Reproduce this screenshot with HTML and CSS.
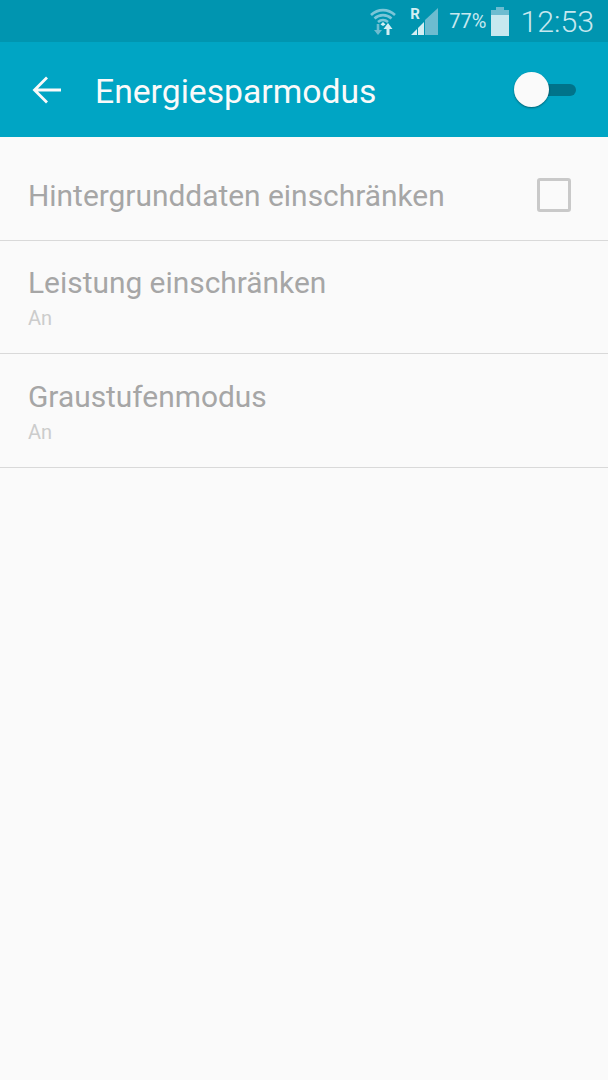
FILE: index.html

```html
<!DOCTYPE html>
<html lang="de">
<head>
  <meta charset="UTF-8">
  <meta name="viewport" content="width=device-width, initial-scale=1.0">
  <title>Energiesparmodus</title>
  <link rel="stylesheet" href="styles.css">
</head>
<body>
  <!-- Status bar -->
  <div class="status-bar">
    <svg class="wifi-icon" width="30" height="30" viewBox="0 0 30 30" fill="none">
      <path d="M3 9C10 2.5 20 2.5 27 9" stroke="#7cc6d8" stroke-width="2.6"/>
      <path d="M6.500 12.500C11.500 8 18.500 8 23.500 12.500" stroke="#7cc6d8" stroke-width="2.6"/>
      <path d="M10 16C13 13.500 17 13.500 20 16" stroke="#7cc6d8" stroke-width="2.6"/>
      <path d="M15 16L12.500 18.500L15 20L17.500 18.500Z" fill="#d3eef3"/>
      <path d="M10 18V25" stroke="#6dbcd0" stroke-width="2.6"/>
      <path d="M6 24H14L10 29Z" fill="#6dbcd0"/>
      <path d="M20 17L15.500 23H18.500V29H21.500V23H24.500Z" fill="#d3eef3"/>
    </svg>
    <div class="signal">
      <span class="roaming">R</span>
      <svg width="28" height="28" viewBox="0 0 28 28">
        <path d="M28 1V28H15V13Z" fill="#6dbcd0"/>
        <path d="M7 22V28H1Z" fill="#d3eef3"/>
        <path d="M14 15V28H8V21Z" fill="#d3eef3"/>
      </svg>
    </div>
    <span class="battery-pct">77%</span>
    <svg class="battery" width="18" height="29" viewBox="0 0 18 29">
      <rect x="5" y="0" width="8" height="3" fill="#6dbcd0"/>
      <rect x="0" y="3" width="18" height="5" fill="#6dbcd0"/>
      <rect x="0" y="8" width="18" height="21" fill="#c7e8ef"/>
    </svg>
    <span class="clock">12:53</span>
  </div>

  <!-- Action bar -->
  <header class="action-bar">
    <svg class="back-icon" width="30" height="30" viewBox="0 0 30 30" fill="none">
      <path d="M4 15H30M16 2.500L3.500 15L16 27.500" stroke="#fafafa" stroke-width="2.8"/>
    </svg>
    <h1 class="title">Energiesparmodus</h1>
    <div class="switch">
      <div class="switch-track"></div>
      <div class="switch-thumb"></div>
    </div>
  </header>

  <!-- Settings list -->
  <ul class="settings">
    <li class="item item-check">
      <span class="item-title">Hintergrunddaten einschränken</span>
      <span class="checkbox"></span>
    </li>
    <li class="item">
      <span class="item-title">Leistung einschränken</span>
      <span class="item-sub">An</span>
    </li>
    <li class="item">
      <span class="item-title">Graustufenmodus</span>
      <span class="item-sub">An</span>
    </li>
  </ul>
</body>
</html>
```

FILE: styles.css

```css
/* General reset */
html, body {
  margin: 0;
  padding: 0;
  height: 100%;
  background: #fafafa;
  font-family: Roboto, "Liberation Sans", sans-serif;
}

/* Status bar */
.status-bar {
  height: 42px;
  background: #0095b0;
  display: flex;
  align-items: center;
  justify-content: flex-end;
  padding-right: 14px;
  color: #c7e8ef;
}

.wifi-icon {
  margin-right: 12px;
}

.signal {
  position: relative;
  width: 28px;
  height: 28px;
  margin-right: 11px;
}

.roaming {
  position: absolute;
  left: 0;
  top: 0;
  font-size: 15px;
  font-weight: 700;
  line-height: 15px;
  color: #d3eef3;
}

.battery-pct {
  font-size: 20px;
  margin-right: 5px;
}

.clock {
  font-size: 30.3px;
  font-weight: 300;
  margin-left: 11px;
}

/* Action bar */
.action-bar {
  height: 95px;
  background: #00a5c4;
  display: flex;
  align-items: center;
  padding-left: 31px;
  padding-right: 32px;
}

.back-icon {
  margin-right: 34px;
}

.title {
  margin: 0;
  flex: 1;
  font-size: 33.7px;
  font-weight: 400;
  color: #fafafa;
  position: relative;
  top: 2px;
}

.switch {
  position: relative;
  width: 62px;
  height: 36px;
}

.switch-track {
  position: absolute;
  left: 20px;
  right: 0;
  top: 12px;
  height: 12px;
  border-radius: 6px;
  background: #00738a;
}

.switch-thumb {
  position: absolute;
  left: 0;
  top: 0;
  width: 35px;
  height: 35px;
  border-radius: 50%;
  background: #fafafa;
  box-shadow: 0 1px 2px rgba(0, 0, 0, 0.4);
}

/* Settings list */
.settings {
  list-style: none;
  margin: 0;
  padding: 0;
}

.item {
  display: flex;
  flex-direction: column;
  justify-content: center;
  gap: 5px;
  height: 111px;
  padding: 1px 28px 0;
  border-bottom: 1px solid #d9d9d9;
}

.item:last-child {
  height: 112px;
}

.item-check {
  flex-direction: row;
  align-items: center;
  justify-content: space-between;
  gap: 0;
  height: 90px;
  padding: 13px 37px 0 28px;
}

.item-check .item-title {
  position: relative;
  top: 1px;
}

.item-title {
  font-size: 29.9px;
  line-height: 36px;
  color: #a6a6a6;
}

.item-sub {
  font-size: 20px;
  line-height: 24px;
  color: #cccccc;
}

.checkbox {
  width: 28px;
  height: 28px;
  border: 3px solid #c9c9c9;
  border-radius: 3px;
}
```
